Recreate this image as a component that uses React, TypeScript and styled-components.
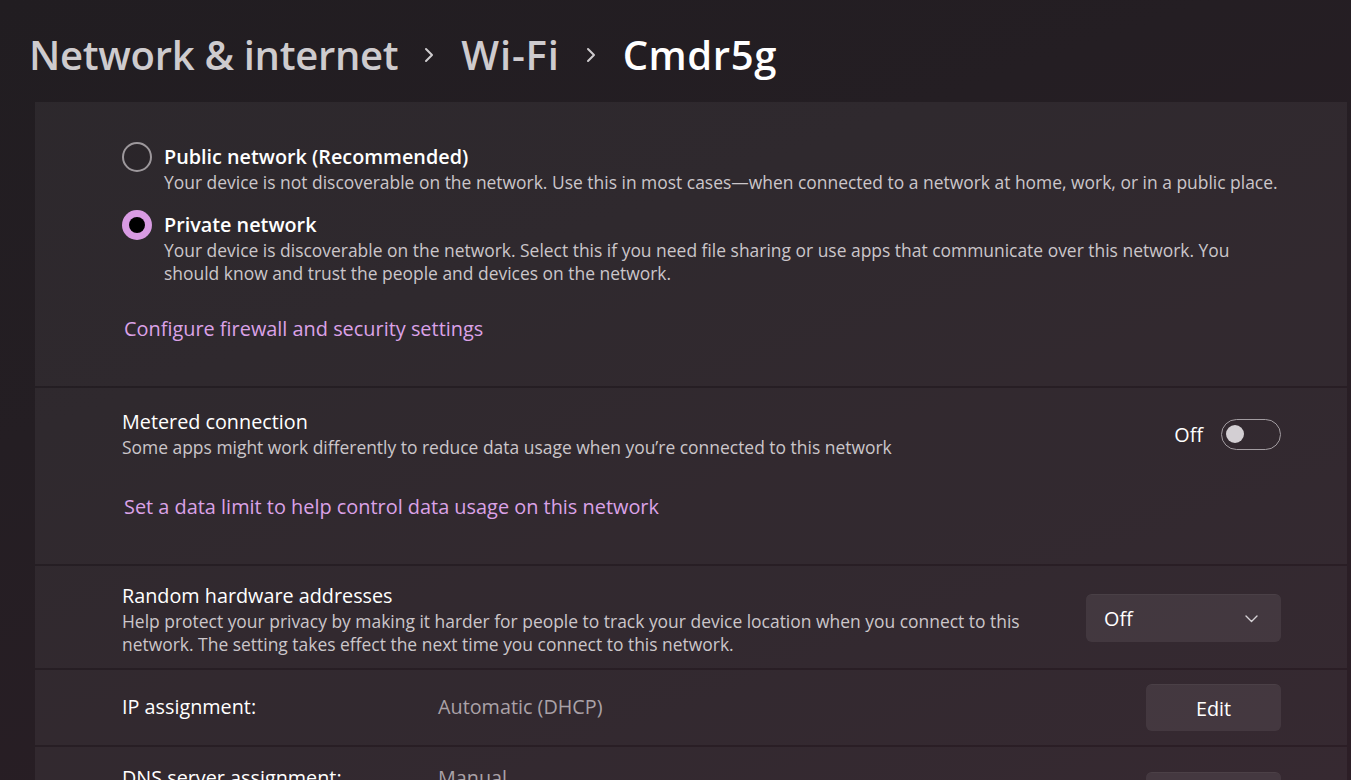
import React from "react";
import styled, { createGlobalStyle } from "styled-components";

const Global = createGlobalStyle`
  html, body {
    margin: 0;
    padding: 0;
    height: 100%;
    overflow: hidden;
  }
  body {
    background: linear-gradient(160deg, #211d21 0%, #241e23 35%, #2c1e26 100%);
    font-family: "Open Sans", "Noto Sans", sans-serif;
    color: #ffffff;
  }
`;

const Page = styled.div`
  display: flex;
  flex-direction: column;
`;

const Breadcrumb = styled.header`
  flex: none;
  display: flex;
  align-items: center;
  height: 102px;
  padding-left: 29px;
  padding-top: 7px;
  box-sizing: border-box;
`;

const Crumb = styled.span<{ $current?: boolean; $ls: number }>`
  font-size: 40px;
  font-weight: 600;
  letter-spacing: ${(p) => p.$ls}px;
  color: ${(p) => (p.$current ? "#ffffff" : "#cecbce")};
  line-height: 1;
`;

const CrumbSep = styled.span`
  display: flex;
  align-items: center;
  margin: 0 26px 0 25px;
  color: #cecbce;
`;

const Cards = styled.div`
  flex: none;
  display: flex;
  flex-direction: column;
  gap: 2px;
  margin-left: 35px;
  margin-right: 4px;
`;

const Card = styled.section<{ $pt: number; $pb: number }>`
  flex: none;
  background: rgba(255, 255, 255, 0.05);
  padding: ${(p) => p.$pt}px 66px ${(p) => p.$pb}px 87px;
  box-sizing: border-box;
`;

const RadioGroup = styled.div`
  display: flex;
  flex-direction: column;
  gap: 17px;
`;

const RadioOption = styled.div`
  display: flex;
  align-items: flex-start;
  gap: 12px;
`;

const RadioCircle = styled.span<{ $checked?: boolean }>`
  flex: none;
  width: 30px;
  height: 30px;
  border-radius: 50%;
  box-sizing: border-box;
  margin-top: -1px;
  display: flex;
  align-items: center;
  justify-content: center;
  ${(p) =>
    p.$checked
      ? `background: #d99be3;`
      : `border: 2px solid #9d989c; background: rgba(0,0,0,0.05);`}
`;

const RadioDot = styled.span`
  width: 16px;
  height: 16px;
  border-radius: 50%;
  background: #000000;
`;

const TextCol = styled.div`
  display: flex;
  flex-direction: column;
  min-width: 0;
  flex: 1;
`;

const Title = styled.div<{ $bold?: boolean }>`
  font-size: 19.8px;
  line-height: 28px;
  font-weight: ${(p) => (p.$bold ? 600 : 400)};
  color: #ffffff;
`;

const Desc = styled.div`
  font-size: 17.45px;
  line-height: 23px;
  color: #cbc6ca;
`;

const Link = styled.a<{ $mt: number }>`
  display: block;
  margin-top: ${(p) => p.$mt}px;
  margin-left: 2px;
  font-size: 19.9px;
  line-height: 28px;
  color: #dba2e7;
  text-decoration: none;
  cursor: pointer;
`;

const Row = styled.div`
  display: flex;
  align-items: center;
  gap: 24px;
`;

const ToggleWrap = styled.div`
  display: flex;
  align-items: center;
  gap: 18px;
  margin-top: 1px;
`;

const ToggleLabel = styled.span`
  font-size: 19.8px;
  color: #ffffff;
`;

const Toggle = styled.span`
  width: 60px;
  height: 31px;
  border-radius: 16px;
  border: 1.5px solid #a29ca1;
  box-sizing: border-box;
  display: flex;
  align-items: center;
  padding-left: 4px;
`;

const Knob = styled.span`
  width: 18px;
  height: 18px;
  border-radius: 50%;
  background: #d3cfd3;
`;

const Dropdown = styled.div`
  flex: none;
  width: 195px;
  height: 48px;
  margin-top: -2px;
  border-radius: 6px;
  background: rgba(255, 255, 255, 0.075);
  border-top: 1px solid rgba(255, 255, 255, 0.04);
  box-sizing: border-box;
  display: flex;
  align-items: center;
  justify-content: space-between;
  padding: 0 23px 0 18px;
  font-size: 19.8px;
  color: #ffffff;
`;

const Button = styled.button`
  flex: none;
  width: 135px;
  height: 47px;
  border-radius: 6px;
  border: none;
  border-top: 1px solid rgba(255, 255, 255, 0.04);
  background: rgba(255, 255, 255, 0.075);
  color: #ffffff;
  font-family: inherit;
  font-size: 19.8px;
  padding: 0;
  padding-top: 1px;
`;

const PropGrid = styled.div`
  display: grid;
  grid-template-columns: 316px 1fr auto;
  align-items: center;
  row-gap: 6px;
`;

const PropLabel = styled.div`
  font-size: 19.8px;
  line-height: 28px;
  color: #ffffff;
  margin-top: -2px;
`;

const PropValue = styled.div`
  font-size: 19.8px;
  line-height: 28px;
  color: #aaa2a8;
  margin-top: -2px;
`;

const ButtonCell = styled.div<{ $rows: number }>`
  grid-column: 3;
  grid-row: 1 / span ${(p) => p.$rows};
  display: flex;
  align-items: center;
`;

const Chevron = () => (
  <svg width="12" height="16" viewBox="0 0 12 16" fill="none">
    <path d="M3 2 L9 8 L3 14" stroke="currentColor" strokeWidth="2" strokeLinecap="round" strokeLinejoin="round" />
  </svg>
);

const ChevronDown = () => (
  <svg width="13" height="8" viewBox="0 0 13 8" fill="none">
    <path d="M1 1 L6.5 6.5 L12 1" stroke="#d6d2d6" strokeWidth="1.4" strokeLinecap="round" strokeLinejoin="round" />
  </svg>
);

export default function App() {
  return (
    <>
      <Global />
      <Page>
        <Breadcrumb>
          <Crumb $ls={-0.3}>Network &amp; internet</Crumb>
          <CrumbSep>
            <Chevron />
          </CrumbSep>
          <Crumb $ls={0.8}>Wi-Fi</Crumb>
          <CrumbSep>
            <Chevron />
          </CrumbSep>
          <Crumb $current $ls={0.6}>Cmdr5g</Crumb>
        </Breadcrumb>

        <Cards>
          <Card $pt={41} $pb={43}>
            <RadioGroup>
              <RadioOption>
                <RadioCircle />
                <TextCol>
                  <Title $bold>Public network (Recommended)</Title>
                  <Desc>
                    Your device is not discoverable on the network. Use this in most cases—when connected to a network at home, work, or in a public place.
                  </Desc>
                </TextCol>
              </RadioOption>
              <RadioOption>
                <RadioCircle $checked>
                  <RadioDot />
                </RadioCircle>
                <TextCol>
                  <Title $bold>Private network</Title>
                  <Desc>
                    Your device is discoverable on the network. Select this if you need file sharing or use apps that communicate over this network. You should know and trust the people and devices on the network.
                  </Desc>
                </TextCol>
              </RadioOption>
            </RadioGroup>
            <Link $mt={30}>Configure firewall and security settings</Link>
          </Card>

          <Card $pt={20} $pb={43}>
            <Row>
              <TextCol>
                <Title>Metered connection</Title>
                <Desc>Some apps might work differently to reduce data usage when you’re connected to this network</Desc>
              </TextCol>
              <ToggleWrap>
                <ToggleLabel>Off</ToggleLabel>
                <Toggle>
                  <Knob />
                </Toggle>
              </ToggleWrap>
            </Row>
            <Link $mt={34}>Set a data limit to help control data usage on this network</Link>
          </Card>

          <Card $pt={16} $pb={12}>
            <Row>
              <TextCol>
                <Title>Random hardware addresses</Title>
                <Desc>
                  Help protect your privacy by making it harder for people to track your device location when you connect to this network. The setting takes effect the next time you connect to this network.
                </Desc>
              </TextCol>
              <Dropdown>
                <span>Off</span>
                <ChevronDown />
              </Dropdown>
            </Row>
          </Card>

          <Card $pt={14} $pb={14}>
            <PropGrid>
              <PropLabel>IP assignment:</PropLabel>
              <PropValue>Automatic (DHCP)</PropValue>
              <ButtonCell $rows={1}>
                <Button>Edit</Button>
              </ButtonCell>
            </PropGrid>
          </Card>

          <Card $pt={19} $pb={19}>
            <PropGrid>
              <PropLabel>DNS server assignment:</PropLabel>
              <PropValue>Manual</PropValue>
              <ButtonCell $rows={2}>
                <Button>Edit</Button>
              </ButtonCell>
              <PropLabel>IPv4 DNS servers:</PropLabel>
              <PropValue>1.1.1.1 (Unencrypted)</PropValue>
            </PropGrid>
          </Card>
        </Cards>
      </Page>
    </>
  );
}
